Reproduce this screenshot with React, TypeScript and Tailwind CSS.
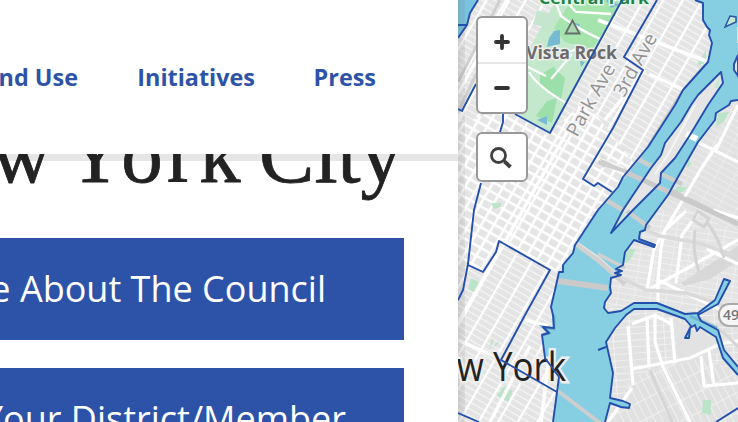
const navItems = [
  { label: 'Land Use', width: 'w-[88px]' },
  { label: 'Initiatives', width: 'w-[118px]' },
  { label: 'Press', width: 'w-[62px]' },
];

function Header() {
  return (
    <header className="h-[154px] bg-white pt-[62px]">
      <nav className="flex w-[376px] justify-end gap-[59px] whitespace-nowrap text-[23.4px] leading-[30px] font-bold text-[#2d53a8]">
        {navItems.map((item) => (
          <a key={item.label} className={item.width + ' flex shrink-0 justify-end'}>{item.label}</a>
        ))}
      </nav>
    </header>
  );
}

function ActionButton({ label, inset }: { label: string; inset: string }) {
  return (
    <a className={'flex h-[102px] w-[404px] shrink-0 items-center justify-end whitespace-nowrap bg-[#2d53a8] text-[36px] text-white ' + inset}>
      {label}
    </a>
  );
}

const shoreWest = 'M695 0L703 3V20L707 27L710 30L709 35L712 43L708 62L683 90L675 105L648 147L623 177L618 187L598 210L575 245L573 253L563 265V272L559 272L555 290L551 307L553 315L554 328L543 327L549 333L542 335L545 358L559 377L557 392L553 422';
const shoreEast = 'M738 100L731 101L729 105L716 113L715 120L698 142L678 177L668 195L657 210L646 225L645 230L640 232L639 239L655 245L654 247L634 240L625 252L623 265L616 269L622 271L615 273L621 275L611 278L610 287L611 293L605 302L604 308L608 313L621 311L634 303H657L685 314L698 313L715 300L724 279L730 281L718 304L698 315L701 321L718 330L724 350L738 367';
const shoreSouth = 'M605 422L610 403L621 407L629 408L630 404L623 401L610 398L613 373L606 342L615 328L626 315L634 309H657L674 315L685 319L691 326L685 338H689L690 328L695 325L697 331L700 327L716 337L723 358L738 375';
const island = 'M721 72L698 95L691 105L681 122L665 143L661 155L651 168L623 210L611 233L633 210L660 183L661 173L675 158L690 135L708 105L723 83Z';
const riverFill = 'M695 0L703 3V20L707 27L710 30L709 35L712 43L708 62L683 90L675 105L648 147L623 177L618 187L598 210L575 245L573 253L563 265V272L559 272L555 290L551 307L553 315L554 328L543 327L549 333L542 335L545 358L559 377L557 392L553 422H605L610 403L621 407L629 408L630 404L623 401L610 398L613 373L606 342L615 328L626 315L634 309H657L674 315L685 319L691 326L685 338H689L690 328L695 325L697 331L700 327L716 337L723 358L738 375V367L724 350L718 330L701 321L698 315L718 304L730 281L724 279L715 300L698 313L685 314L657 303H634L621 311L608 313L604 308L605 302L611 293L610 287L611 278L621 275L615 273L622 271L616 269L623 265L625 252L634 240L654 247L655 245L639 239L640 232L645 230L646 225L657 210L668 195L678 177L698 142L715 120L716 113L729 105L731 101L738 100V0Z';
const districts = 'M478 0L470 13L467 25L458 38M458 25H467M476 84L465 105L462 111L458 109M622 0L550 133L515 114M657 0L624 57L643 70L613 128L583 179L594 186L598 183L612 192M503 110V122L500 132M481 183L474 210L468 264L463 290L458 300M468 265L483 272L496 252L499 241L550 270L525 315L501 360L557 392M458 413L479 422M716 422L738 408M598 350L606 347';

function CityMap() {
  return (
    <svg className="block h-[422px] w-[280px]" viewBox="458 0 280 422" fontFamily="'Open Sans', sans-serif">
      <defs>
        <pattern id="manhattan" width="17" height="6" patternUnits="userSpaceOnUse" patternTransform="translate(464 3) rotate(30)">
          <rect width="17" height="6" fill="#e4e4e4" />
          <path d="M0 0H17" stroke="#f6f6f6" strokeWidth="2.4" />
          <path d="M0 0V6" stroke="#fff" strokeWidth="4.4" />
        </pattern>
        <pattern id="midtown" width="11" height="9" patternUnits="userSpaceOnUse" patternTransform="rotate(30)">
          <rect width="11" height="9" fill="#e5e5e5" />
          <path d="M0 0H11M0 0V9" stroke="#fff" strokeWidth="5" />
        </pattern>
        <pattern id="queens" width="17" height="6" patternUnits="userSpaceOnUse" patternTransform="rotate(28)">
          <rect width="17" height="6" fill="#e2e2e2" />
          <path d="M0 0H17M0 0V6" stroke="#f0f0f0" strokeWidth="1.4" />
        </pattern>
        <pattern id="hunters" width="16" height="6" patternUnits="userSpaceOnUse" patternTransform="rotate(9)">
          <rect width="16" height="6" fill="#e4e4e4" />
          <path d="M0 0H16M0 0V6" stroke="#f3f3f3" strokeWidth="1.4" />
        </pattern>
        <pattern id="greenpoint" width="17" height="6.5" patternUnits="userSpaceOnUse" patternTransform="translate(630 340) rotate(-4)">
          <rect width="17" height="6.5" fill="#e2e2e2" />
          <path d="M0 0H17M0 0V6.5" stroke="#f5f5f5" strokeWidth="1.6" />
        </pattern>
        <pattern id="williamsburg" width="7" height="18" patternUnits="userSpaceOnUse" patternTransform="rotate(-27)">
          <rect width="7" height="18" fill="#e1e1e1" />
          <path d="M0 0V18M0 0H7" stroke="#f4f4f4" strokeWidth="1.5" />
        </pattern>
        <linearGradient id="edge"><stop stopColor="#666" stopOpacity=".22" /><stop offset="1" stopColor="#777" stopOpacity=".12" /></linearGradient>
      </defs>
      <rect x="458" width="280" height="422" fill="url(#manhattan)" />
      <path d="M458 125L505 107L550 133L585 100L635 165L598 210L575 245L560 270L550 272L499 241L483 272L458 265Z" fill="url(#midtown)" />
      <path d="M458 0H478L470 13L467 25L458 38Z" fill="#78c4e0" />
      <path d="M500 0L458 82M505 15L458 112" stroke="#cfcfcf" strokeWidth="3" />
      <path d="M509 0L458 94" stroke="#fff" strokeWidth="3" />

      <path d="M738 100L716 113L657 210L625 252L738 290Z" fill="url(#queens)" />
      <path d="M657 210L620 255L600 315H738V232L690 212Z" fill="url(#hunters)" />
      <path d="M600 307H738V422H600Z" fill="url(#greenpoint)" />
      <path d="M631 378L664 366L699 355L738 373V422H608Z" fill="url(#williamsburg)" />
      <path d="M674 319L697 332L718 339L722 352L678 364Z" fill="#e2e2e2" />
      <path d="M681 283L738 246V261L710 279L684 286Z" fill="#d8d8d8" />

      <path d="M556 0H621L598 45L550 132L505 107L520 77L530 48Z" fill="#c3e8cc" />
      <path d="M572 0H621L606 28L592 49L565 42L554 28L562 15Z" fill="#a5e5ad" />
      <path d="M540 75L553 67L565 78L561 100L540 85Z M547 101L557 98L552 123L536 116Z" fill="#9ddfaa" />
      <path d="M554 31L560 30V44L547 47L549 38ZM567 22L580 24L576 33ZM580 61L585 62L581 67ZM547 116V125L537 120ZM606 0H611L619 5L611 8Z" fill="#76bbd2" />
      <path d="M555 0L561 16Q576 28 602 40M529 72Q537 86 566 103M572 54L551 79M546 76L526 66M565 0L576 12L611 14M535 50L556 57L579 48" fill="none" stroke="#fff" strokeWidth="2.3" />
      <path d="M537 10L556 16L547 28L533 24Z" fill="#c5e5ce" />
      <path d="M491 203L501 203V207L494 209ZM471 278L479 282L474 292L468 289ZM489 350L492 339L494 340ZM493 348L497 342L499 343ZM504 386L513 391L508 402L497 396ZM697 64L706 50V61L699 66ZM703 400H711V415L702 413ZM718 113L729 112L724 121L716 127ZM678 186L688 188L678 194L670 195ZM688 160L692 164L687 168ZM627 249L636 249L630 260L624 264Z" fill="#bce4c8" />

      <path d="M598 20L706 61M649 74L684 90M501 38L458 122M605 120L645 70M458 340L494 356M525 320L548 326M490 422L530 346M581 107L458 325M560 282L551 343L541 422" fill="none" stroke="#fff" strokeWidth="3.5" />
      <path d="M598 162L622 170L667 188L738 224M601 158L608 163L602 166" fill="none" stroke="#cecece" strokeWidth="4" />
      <path d="M598 157L624 168" fill="none" stroke="#f3f3f3" strokeWidth="1.5" />
      <path d="M687 137L738 162M717 145L701 169L654 249L647 290M738 105L716 150M686 211L665 230L661 248L657 291M700 210L682 235L676 283M738 218L713 210M707 249L738 264M648 290L738 240M658 303V280L738 318M628 326L633 385M655 315V342L663 367L690 422M671 318L675 363M647 318L649 366M632 369L690 358L720 344L738 341M701 356L704 386L738 383M709 351L714 386M608 422L632 388M632 324L655 315L671 324" fill="none" stroke="#fff" strokeWidth="3.2" />
      <path d="M646 230L660 236L702 244L738 257M616 275L646 290L686 293L738 310" fill="none" stroke="#dadada" strokeWidth="3.5" />
      <path d="M698 211L709 219L704 227L693 220ZM695 230Q692 251 699 272M707 222Q719 238 724 258" fill="none" stroke="#d4d4d4" strokeWidth="3" />
      <path d="M692 315Q719 325 738 347M650 370L672 422" fill="none" stroke="#d6d6d6" strokeWidth="3" />

      <path d={riverFill} fill="#86cfe2" />
      <path d={island} fill="#e5e5e5" />
      <path d="M721 74L714 88L718 88ZM611 232L628 211L619 215Z" fill="#c3ead0" />
      <path d="M695 105L669 153L655 174" fill="none" stroke="#f5f5f5" strokeWidth="2" />
      <path d="M738 55L734 64V70L738 76Z" fill="#e5e5e5" stroke="#2d53a8" strokeWidth="2" />
      <path d="M725 27L730 16L736 17V22Z" fill="#c3ead0" stroke="#2d53a8" strokeWidth="1.5" />
      <path d="M738 27V43" stroke="#e2e2e2" strokeWidth="2" />
      <g fill="none">
        <path d="M598 254L625 268" stroke="#cfcfcf" strokeWidth="3.5" />
        <path d="M576 244L598 260L625 284" stroke="#d0d0d0" strokeWidth="5" />
        <path d="M577 242L600 258L625 281" stroke="#e2e2e2" strokeWidth="1.5" />
        <path d="M558 281L608 288" stroke="#cacaca" strokeWidth="6" />
        <path d="M558 391L600 423" stroke="#cecece" strokeWidth="4" />
        <path d="M625 172L667 191L738 224" stroke="#cacaca" strokeWidth="5" />
        <path d="M638 159L651 166M661 174L682 184M606 200L624 211M627 211L650 228" stroke="#cdcdcd" strokeWidth="4.5" />
        <path d="M686 134L697 139" stroke="#fff" strokeWidth="6" />
      </g>
      <path d="M708 64L683 94L675 107L649 149L625 180" fill="none" stroke="#cbcbcb" strokeWidth="2" transform="translate(-3 0)" />
      <path d="M458 0H465V422H458Z" fill="url(#edge)" />
      <path d="M572.5 20.5L579.5 33.5H565.5Z" fill="#a7d6b0" stroke="#666f68" strokeWidth="1.8" />

      <text x="539" y="4" fontSize="16.5" fontWeight="700" fill="#228347" stroke="#e5f7e8" strokeWidth="3" paintOrder="stroke" textLength="110" lengthAdjust="spacingAndGlyphs">Central Park</text>
      <text x="526" y="58.5" fontSize="17.5" fontWeight="700" fill="#6c6c6c" stroke="#eee" strokeWidth="3" paintOrder="stroke" textLength="91" lengthAdjust="spacingAndGlyphs">Vista Rock</text>
      <g fill="#929292" stroke="#f5f5f5" strokeWidth="3" paintOrder="stroke" fontSize="19">
        <text transform="translate(577 138) rotate(-61)" textLength="80" lengthAdjust="spacingAndGlyphs">Park Ave</text>
        <text transform="translate(624 98) rotate(-61)" textLength="69" lengthAdjust="spacingAndGlyphs">3rd Ave</text>
      </g>
      <text x="411" y="381" fontSize="40" fill="#232323" stroke="#eee" strokeWidth="5" paintOrder="stroke" textLength="155" lengthAdjust="spacingAndGlyphs">New York</text>
      <rect x="719" y="304" width="32" height="22" rx="10" fill="#f6f6f6" stroke="#aaa" strokeWidth="2" />
      <text x="723" y="320" fontSize="14" fontWeight="600" fill="#777">495</text>
      <path d="M554 315V329L543 327L549 333L542 335M690 316L717 328" fill="none" stroke="#6fb1cd" strokeWidth="3" />
      <g fill="none" stroke="#2350ad" strokeWidth="1.9" strokeLinejoin="round">
        <path d={districts} />
        <path d={shoreWest} /><path d={shoreEast} /><path d={shoreSouth} /><path d={island} />
      </g>
    </svg>
  );
}

function MapControls() {
  return (
    <div className="absolute top-[16px] left-[18px] flex flex-col gap-[18px]">
      <div className="flex h-[98px] w-[52px] flex-col rounded-[6px] border-2 border-[#999] bg-white">
        <button aria-label="Zoom in" className="flex h-[46px] items-center justify-center border-b-2 border-[#e5e5e5]">
          <svg className="mt-[3px] h-[16px] w-[16px]" viewBox="0 0 16 16"><path d="M8 2V14M2 8H14" stroke="#333" strokeWidth="3.8" strokeLinecap="round" /></svg>
        </button>
        <button aria-label="Zoom out" className="flex h-[46px] items-center justify-center">
          <svg className="mt-px h-[16px] w-[16px]" viewBox="0 0 16 16"><path d="M2 8H14" stroke="#333" strokeWidth="3.8" strokeLinecap="round" /></svg>
        </button>
      </div>
      <button aria-label="Search" className="flex h-[50px] w-[52px] items-center justify-center rounded-[6px] border-2 border-[#999] bg-white">
        <svg className="h-[24px] w-[24px]" viewBox="0 0 24 24" fill="none" stroke="#404040"><circle cx="8.5" cy="10.5" r="7" strokeWidth="2.8" /><path d="M13 15L16 17.5" strokeWidth="2.5" /><path d="M14.5 16.5L20.5 22" strokeWidth="3.8" /></svg>
      </button>
    </div>
  );
}

export default function App() {
  return (
    <div className="flex h-[422px] w-[738px] overflow-hidden bg-white font-['Open_Sans',sans-serif]">
      <div className="flex w-[458px] shrink-0 flex-col overflow-hidden">
        <Header />
        <main className="h-[268px] overflow-hidden">
          <div className="h-[84px] border-t-[7px] border-[#e6e6e6]">
            <h1 className="-mt-[55px] flex w-[402px] justify-end whitespace-nowrap font-['Liberation_Serif',serif] text-[83px] leading-[96px] text-[#222] [-webkit-text-stroke:0.8px_#222]">
              <span className="mr-[14px]">New</span><span className="mr-[14px] tracking-[4.4px]">York</span><span>City</span>
            </h1>
          </div>
          <div className="flex flex-col gap-[28px]">
            <ActionButton label="Learn More About The Council" inset="pr-[78px]" />
            <ActionButton label="Find Your District/Member" inset="pr-[58px]" />
          </div>
        </main>
      </div>
      <aside className="relative w-[280px] shrink-0">
        <CityMap />
        <MapControls />
      </aside>
    </div>
  );
}
